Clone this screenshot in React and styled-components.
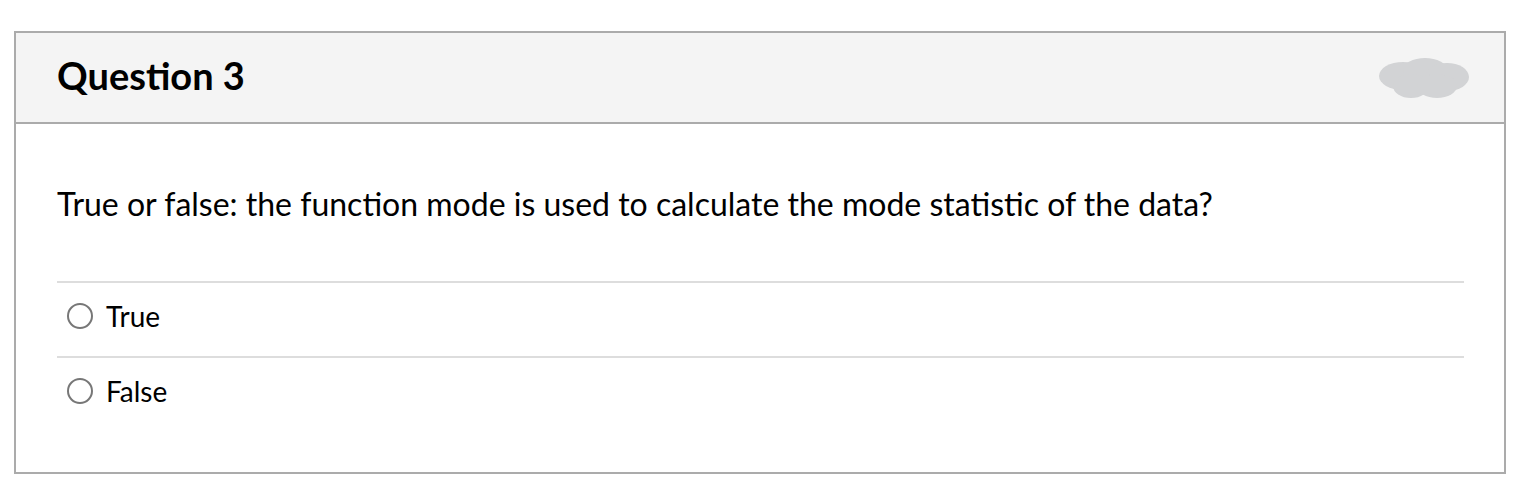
import React from "react";
import styled, { createGlobalStyle } from "styled-components";

const GlobalStyle = createGlobalStyle`
  html, body {
    margin: 0;
    padding: 0;
    background: #fff;
    font-family: Lato, "Open Sans", sans-serif;
    color: #000;
  }
`;

function Cloud() {
  return (
    <svg width="92" height="44" viewBox="0 0 92 44">
      <g fill="#d2d3d5">
        <ellipse cx="24" cy="20" rx="24" ry="14" />
        <ellipse cx="46" cy="14" rx="22" ry="12" />
        <ellipse cx="68" cy="21" rx="22" ry="14" />
        <ellipse cx="32" cy="30" rx="18" ry="12" />
        <ellipse cx="58" cy="30" rx="20" ry="12" />
      </g>
    </svg>
  );
}

function App() {
  const answers = ["True", "False"];
  return (
    <>
      <GlobalStyle />
      <Page>
        <Card>
          <Header>
            <Title>Question 3</Title>
            <Cloud />
          </Header>
          <Body>
            <QuestionText>
              True or false: the function mode is used to calculate the mode
              statistic of the data?
            </QuestionText>
            <Answers>
              {answers.map((a) => (
                <Answer key={a}>
                  <Radio />
                  <Label>{a}</Label>
                </Answer>
              ))}
            </Answers>
          </Body>
        </Card>
      </Page>
    </>
  );
}

const Page = styled.div`
  padding: 31px 18px 0 14px;
`;

const Card = styled.div`
  width: 1488px;
  border: 2px solid #ababab;
  background: #fff;
`;

const Header = styled.div`
  height: 89px;
  background: #f4f4f4;
  border-bottom: 2px solid #ababab;
  display: flex;
  align-items: center;
  justify-content: space-between;
  padding: 0 33px 0 41px;
`;

const Title = styled.h2`
  margin: 0 0 5px;
  font-size: 38px;
  line-height: 44px;
  font-weight: 700;
`;

const Body = styled.div`
  padding: 62px 40px 41px 41px;
`;

const QuestionText = styled.p`
  margin: 0 0 59px;
  font-size: 32px;
  line-height: 36px;
`;

const Answers = styled.div`
  display: flex;
  flex-direction: column;
`;

const Answer = styled.label`
  display: flex;
  align-items: center;
  gap: 13px;
  box-sizing: border-box;
  height: 75px;
  border-top: 2px solid #dddddd;
  padding: 0 0 8px 10px;
`;

const Radio = styled.span`
  width: 26px;
  height: 26px;
  border: 2px solid #777;
  border-radius: 50%;
  box-sizing: border-box;
`;

const Label = styled.span`
  font-size: 28px;
`;

export default App;
